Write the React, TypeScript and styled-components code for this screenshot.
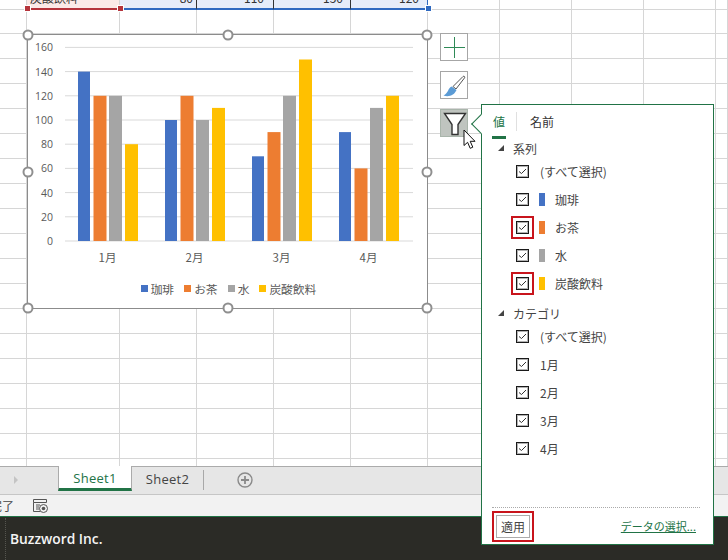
import styled, {createGlobalStyle} from "styled-components";

const JP = `"Noto Sans CJK JP", "Noto Sans", sans-serif`;
const RED = "#c8141c";

const colWidths = [27, 93, 77, 77, 77, 77, 72, 72, 72, 72, 12];
const rowHeights = [10, 24, ...Array(17).fill(25), 8];

const series = [
    {name: "珈琲", color: "#4472c4", values: [140, 100, 70, 90]},
    {name: "お茶", color: "#ed7d31", values: [120, 120, 90, 60]},
    {name: "水", color: "#a5a5a5", values: [120, 100, 120, 110]},
    {name: "炭酸飲料", color: "#ffc000", values: [80, 110, 150, 120]},
];
const months = ["1月", "2月", "3月", "4月"];
const catX = [78, 165, 252, 339];
const barOffset = [0, 15.5, 31, 47];
const ticks = [0, 20, 40, 60, 80, 100, 120, 140, 160];
const baseY = 241;
const unit = 1.21;

const handles = [
    {x: 0, y: 0}, {x: 50, y: 0}, {x: 100, y: 0},
    {x: 0, y: 50}, {x: 100, y: 50},
    {x: 0, y: 100}, {x: 50, y: 100}, {x: 100, y: 100},
];

const topCells: Record<number, { tone: "pink" | "blue"; text: string; pad: number }> = {
    1: {tone: "pink", text: "炭酸飲料", pad: 3},
    2: {tone: "blue", text: "80", pad: 3},
    3: {tone: "blue", text: "110", pad: 9},
    4: {tone: "blue", text: "150", pad: 7},
    5: {tone: "blue", text: "120", pad: 8},
};

const SheetGrid = () => (
    <Grid>
        {rowHeights.map((_, r) => colWidths.map((_, c) => {
            const top = r === 0 ? topCells[c] : undefined;
            return (
                <Cell key={`${r}-${c}`} $tone={top?.tone} $last={c === 5}>
                    {top && <CellText $left={top.tone === "pink"} $pad={top.pad}>{top.text}</CellText>}
                </Cell>
            );
        }))}
        <RangeHandle $x={24} $color="#b5343c"/>
        <RangeHandle $x={117} $color="#b5343c"/>
        <RangeHandle $x={425} $color="#2f69c0"/>
    </Grid>
);

const Chart = () => (
    <ChartFrame>
        <svg width="399" height="243" viewBox="28 35 399 243" style={{display: "block"}}>
            {ticks.map(t => (
                <g key={t}>
                    <line x1="65" x2="413" y1={baseY - t * unit} y2={baseY - t * unit} stroke="#d9d9d9"/>
                    <text x="53" y={baseY - t * unit + 4} textAnchor="end" fontSize="10.5" fill="#595959" fontFamily="Open Sans">{t}</text>
                </g>
            ))}
            {series.map((s, i) => s.values.map((v, m) => (
                <rect key={`${i}-${m}`} x={catX[m] + barOffset[i]} y={baseY - v * unit} width={i === 0 ? 12 : 13} height={v * unit} fill={s.color}/>
            )))}
            {months.map((m, i) => (
                <text key={m} x={catX[i] + 29.5} y="262" textAnchor="middle" fontSize="11.5" fill="#595959" fontFamily={JP}>{m}</text>
            ))}
        </svg>
        <Legend>
            {series.map(s => (
                <LegendItem key={s.name}>
                    <LegendSwatch $color={s.color}/>
                    {s.name}
                </LegendItem>
            ))}
        </Legend>
        {handles.map(h => <Handle key={`${h.x}-${h.y}`} $x={h.x} $y={h.y}/>)}
    </ChartFrame>
);

const SideButtons = () => (
    <Buttons>
        <SideButton>
            <svg width="27" height="27" viewBox="0 0 27 27">
                <path d="M13.5 3v21M3 13.5h21" stroke="#2f8a57" strokeWidth="1" fill="none"/>
            </svg>
        </SideButton>
        <SideButton>
            <svg width="27" height="27" viewBox="0 0 27 27">
                <path d="M12 14.5L22 4.5c1-.8 2.2.2 1.6 1.3L15 17z" fill="#fff" stroke="#555" strokeWidth="1"/>
                <path d="M10.5 14.5C7 16 7.5 21 2.5 23.5C8 25.5 13.5 23 15.5 18z" fill="#5b9bd5"/>
            </svg>
        </SideButton>
        <SideButton $active>
            <svg width="27" height="27" viewBox="0 0 27 27">
                <path d="M3.5 3.5h21L17 14.5v10h-6v-10z" fill="#fff" stroke="#333" strokeWidth="1.4"/>
            </svg>
        </SideButton>
    </Buttons>
);

const FilterSection = ({title, items}: { title: string, items: { label: string, color?: string, marked?: boolean }[] }) => (
    <section>
        <SectionHead><Triangle/>{title}</SectionHead>
        {items.map(item => (
            <Row key={item.label}>
                <Check $marked={item.marked}>
                    <svg width="9" height="7" viewBox="0 0 9 7">
                        <path d="M1 3.5l2.5 2L8 1" fill="none" stroke="#333" strokeWidth="1"/>
                    </svg>
                </Check>
                {item.color && <Swatch $color={item.color}/>}
                <RowLabel $indent={!!item.color}>{item.label}</RowLabel>
            </Row>
        ))}
    </section>
);

const FilterPopup = () => (
    <Popup>
        <Caret/>
        <Tabs>
            <Tab $active>値</Tab>
            <TabDivider/>
            <Tab>名前</Tab>
        </Tabs>
        <FilterSection title="系列" items={[
            {label: "(すべて選択)"},
            {label: "珈琲", color: "#4472c4"},
            {label: "お茶", color: "#ed7d31", marked: true},
            {label: "水", color: "#a5a5a5"},
            {label: "炭酸飲料", color: "#ffc000", marked: true},
        ]}/>
        <SectionGap/>
        <FilterSection title="カテゴリ" items={[
            {label: "(すべて選択)"},
            {label: "1月"},
            {label: "2月"},
            {label: "3月"},
            {label: "4月"},
        ]}/>
        <PopupFooter>
            <ApplyButton>適用</ApplyButton>
            <DataLink>データの選択...</DataLink>
        </PopupFooter>
    </Popup>
);

const App = () => (
    <Page>
        <GlobalStyle/>
        <Sheet>
            <SheetGrid/>
            <Chart/>
            <SideButtons/>
        </Sheet>
        <TabBar>
            <ScrollArrow/>
            <SheetTab $active>Sheet1</SheetTab>
            <SheetTab>Sheet2</SheetTab>
            <TabSeparator/>
            <AddSheet>
                <svg width="16" height="16" viewBox="0 0 16 16">
                    <circle cx="8" cy="8" r="7" fill="none" stroke="#8a8a8a" strokeWidth="1.4"/>
                    <path d="M8 4v8M4 8h8" stroke="#8a8a8a" strokeWidth="1.8"/>
                </svg>
            </AddSheet>
        </TabBar>
        <StatusBar>
            <StatusText>完了</StatusText>
            <svg width="15" height="14" viewBox="0 0 15 14">
                <path d="M.5.5h13v3H.5zM.5 3.5v9H7" fill="none" stroke="#555"/>
                <path d="M3 6h4M3 8h3M3 10h3" stroke="#555"/>
                <circle cx="10.5" cy="9.5" r="4" fill="#f2f2f2" stroke="#555"/>
                <circle cx="10.5" cy="9.5" r="1.8" fill="#555"/>
            </svg>
        </StatusBar>
        <Taskbar>Buzzword Inc.</Taskbar>
        <FilterPopup/>
        <Cursor width="14" height="21" viewBox="0 0 14 21">
            <path d="M1 1v15.5l3.6-3.2 2.6 6 2.6-1.1-2.6-5.9h4.8z" fill="#fff" stroke="#111" strokeWidth="1"/>
        </Cursor>
    </Page>
);

const GlobalStyle = createGlobalStyle`
  html, body {
    margin: 0;
    overflow: hidden;
    background: #fff;
  }
`

const Page = styled.div`
  display: flex;
  flex-direction: column;
  font-family: ${JP};
  height: 560px;
  overflow: hidden;
  position: relative;
  width: 728px;
`

const Sheet = styled.main`
  height: 466px;
  overflow: hidden;
  position: relative;
`

const Grid = styled.div`
  display: grid;
  grid-template-columns: ${colWidths.map(w => `${w}px`).join(" ")};
  grid-template-rows: ${rowHeights.map(h => `${h}px`).join(" ")};
  position: relative;
`

const Cell = styled.div<{ $tone?: "pink" | "blue", $last?: boolean }>`
  align-items: flex-end;
  background: ${p => p.$tone === "pink" ? "#fbeae8" : p.$tone === "blue" ? "#e6ecf9" : "transparent"};
  border-bottom: ${p => p.$tone === "pink" ? "2px solid #b5343c" : p.$tone === "blue" ? "2px solid #2f69c0" : "1px solid #d6d6d6"};
  border-right: ${p => p.$tone === "blue" ? (p.$last ? "1px solid #2f69c0" : "1px solid #333") : "1px solid #d6d6d6"};
  box-sizing: border-box;
  display: flex;
  overflow: hidden;
`

const CellText = styled.span<{ $left?: boolean, $pad: number }>`
  color: #333;
  flex: 1;
  font-size: 12px;
  line-height: 16px;
  margin-bottom: 2px;
  padding: 0 ${p => p.$pad}px;
  text-align: ${p => p.$left ? "left" : "right"};
  white-space: nowrap;
`

const RangeHandle = styled.span<{ $x: number, $color: string }>`
  background: ${p => p.$color};
  border: 1px solid #fff;
  height: 5px;
  left: ${p => p.$x}px;
  position: absolute;
  top: 5px;
  width: 5px;
`

const ChartFrame = styled.div`
  background: #fff;
  border: 1px solid #8c8c8c;
  box-sizing: border-box;
  height: 275px;
  left: 27px;
  position: absolute;
  top: 34px;
  width: 401px;
`

const Legend = styled.div`
  align-items: center;
  display: flex;
  gap: 10px;
  height: 20px;
  justify-content: center;
  padding-left: 2px;
`

const LegendItem = styled.span`
  align-items: center;
  color: #595959;
  display: flex;
  font-size: 11.75px;
  gap: 3px;
`

const LegendSwatch = styled.i<{ $color: string }>`
  background: ${p => p.$color};
  height: 7px;
  width: 7px;
`

const Handle = styled.span<{ $x: number, $y: number }>`
  background: #fff;
  border: 2px solid #8f8f8f;
  border-radius: 50%;
  box-sizing: border-box;
  height: 11px;
  left: ${p => p.$x}%;
  position: absolute;
  top: ${p => p.$y}%;
  transform: translate(-50%, -50%);
  width: 11px;
`

const Buttons = styled.div`
  display: flex;
  flex-direction: column;
  gap: 10px;
  left: 440px;
  position: absolute;
  top: 33px;
`

const SideButton = styled.button<{ $active?: boolean }>`
  background: ${p => p.$active ? "#bfc4bf" : "#fff"};
  border: 1px solid ${p => p.$active ? "#a9b5ab" : "#a6a6a6"};
  box-sizing: border-box;
  display: block;
  height: 28px;
  padding: 0;
  width: 28px;

  svg {
    display: block;
    margin: 0;
  }
`

const Popup = styled.aside`
  background: #fff;
  border: 1px solid #217346;
  box-sizing: border-box;
  display: flex;
  flex-direction: column;
  height: 441px;
  left: 481px;
  position: absolute;
  top: 104px;
  width: 233px;
`

const Caret = styled.span`
  background: #fff;
  border-bottom: 1px solid #217346;
  border-left: 1px solid #217346;
  height: 13px;
  left: -8px;
  position: absolute;
  top: 12px;
  transform: rotate(45deg);
  width: 13px;
`

const Tabs = styled.div`
  align-items: flex-start;
  display: flex;
  height: 34px;
  padding-left: 10px;
  position: relative;
`

const Tab = styled.div<{ $active?: boolean }>`
  border-bottom: 3px solid ${p => p.$active ? "#217346" : "transparent"};
  box-sizing: border-box;
  color: ${p => p.$active ? "#217346" : "#333"};
  font-size: 12px;
  height: 34px;
  line-height: 34px;
  padding: 0 1px;
`

const TabDivider = styled.span`
  background: #e0e0e0;
  height: 19px;
  margin: 7px 12px 0 10px;
  width: 1px;
`

const SectionHead = styled.div`
  align-items: center;
  color: #444;
  display: flex;
  font-size: 12px;
  height: 18px;
  padding-left: 16px;
`

const SectionGap = styled.div`
  height: 7px;
`

const Triangle = styled.span`
  border-bottom: 6px solid #444;
  border-left: 6px solid transparent;
  height: 0;
  margin-right: 9px;
  width: 0;
`

const Row = styled.div`
  align-items: center;
  color: #444;
  display: flex;
  font-size: 12px;
  height: 28px;
  padding-left: 34px;
`

const Check = styled.span<{ $marked?: boolean }>`
  align-items: center;
  border: 1px solid #1a1a1a;
  box-shadow: inset 0 0 0 1px rgba(0, 0, 0, .3);
  box-sizing: border-box;
  display: flex;
  height: 13px;
  justify-content: center;
  outline: ${p => p.$marked ? `2px solid ${RED}` : "none"};
  outline-offset: 3px;
  width: 13px;
`

const Swatch = styled.i<{ $color: string }>`
  background: ${p => p.$color};
  height: 13px;
  margin-left: 10px;
  width: 6px;
`

const RowLabel = styled.span<{ $indent?: boolean }>`
  margin-left: ${p => p.$indent ? "10px" : "11px"};
`

const PopupFooter = styled.footer`
  align-items: center;
  border-top: 1px dotted #aaa;
  display: flex;
  height: 36px;
  justify-content: space-between;
  margin: auto 13px 0 10px;
  padding: 0 4px;
`

const ApplyButton = styled.button`
  background: #fff;
  border: 1px solid #ababab;
  box-sizing: border-box;
  color: #444;
  font-family: ${JP};
  font-size: 12px;
  height: 23px;
  outline: 2px solid ${RED};
  outline-offset: 2px;
  padding: 0;
  width: 34px;
`

const DataLink = styled.a`
  color: #217346;
  font-size: 11px;
  text-decoration: underline;
`

const TabBar = styled.div`
  align-items: flex-start;
  background: #e6e6e6;
  border-bottom: 1px solid #c6c6c6;
  border-top: 1px solid #ababab;
  box-sizing: border-box;
  display: flex;
  height: 29px;
  padding-left: 58px;
  position: relative;
`

const ScrollArrow = styled.span`
  border-bottom: 4px solid transparent;
  border-left: 4px solid #c4c4c4;
  border-top: 4px solid transparent;
  left: 14px;
  position: absolute;
  top: 9px;
`

const SheetTab = styled.div<{ $active?: boolean }>`
  background: ${p => p.$active ? "#fff" : "transparent"};
  border-bottom: 3px solid ${p => p.$active ? "#217346" : "transparent"};
  border-left: ${p => p.$active ? "1px solid #ababab" : "none"};
  border-right: ${p => p.$active ? "1px solid #ababab" : "none"};
  box-sizing: border-box;
  color: ${p => p.$active ? "#217346" : "#444"};
  font-family: "Open Sans", sans-serif;
  font-size: 13px;
  height: 25px;
  letter-spacing: .3px;
  line-height: 25px;
  margin-top: ${p => p.$active ? "-1px" : "0"};
  text-align: center;
  width: ${p => p.$active ? "74px" : "71px"};
`

const TabSeparator = styled.span`
  background: #a8a8a8;
  height: 20px;
  margin-top: 3px;
  width: 1px;
`

const AddSheet = styled.span`
  display: flex;
  margin: 5px 0 0 33px;
`

const StatusBar = styled.div`
  align-items: center;
  background: #f2f2f2;
  display: flex;
  gap: 19px;
  height: 21px;
  overflow: hidden;
`

const StatusText = styled.span`
  color: #444;
  font-size: 12px;
  margin-left: -10px;
`

const Taskbar = styled.footer`
  align-items: center;
  background: #2b2b26;
  border-top: 1px solid #217346;
  box-sizing: border-box;
  color: #f4f4f4;
  display: flex;
  flex: 1;
  font-family: "Open Sans", sans-serif;
  font-size: 13.8px;
  font-weight: 600;
  padding-left: 10px;
  position: relative;

  &::before {
    border-left: 1px dotted #55554f;
    bottom: 0;
    content: "";
    left: 5px;
    position: absolute;
    top: 1px;
  }
`

const Cursor = styled.svg`
  left: 463px;
  position: absolute;
  top: 129px;
`

export default App;
